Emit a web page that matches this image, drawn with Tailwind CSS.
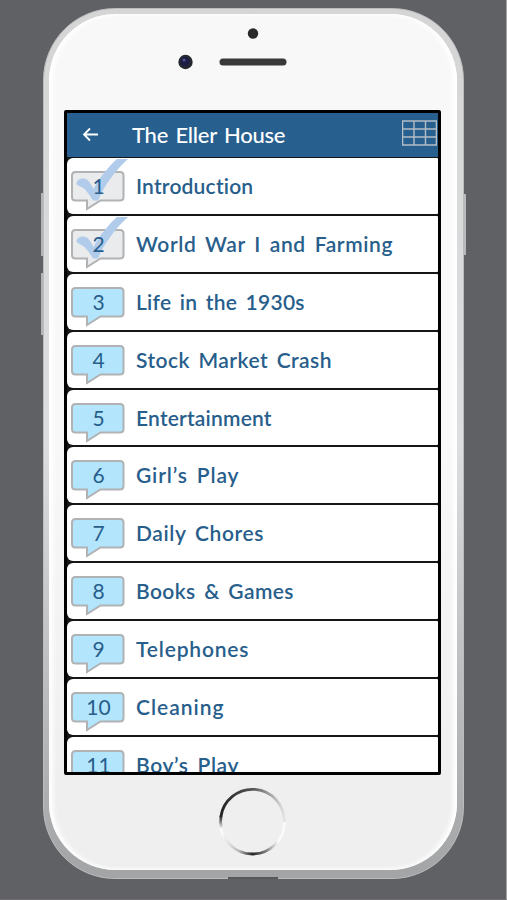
<!DOCTYPE html>
<html lang="en">
<head>
<meta charset="utf-8">
<title>The Eller House</title>
<script src="https://cdn.jsdelivr.net/npm/@tailwindcss/browser@4"></script>
</head>
<body class="w-[507px] h-[900px] overflow-hidden bg-[#606165] border-r border-b border-r-[#a5a5a8] border-b-[#707074] font-[Lato,sans-serif]">
<svg width="0" height="0" class="absolute">
  <symbol id="bubble" viewBox="0 0 60 56">
    <path d="M8.500 14H53Q56.500 14 56.500 17.500V39Q56.500 42.500 53 42.500H33.500L20 51V42.500H8.500Q5 42.500 5 39V17.500Q5 14 8.500 14Z" fill="currentColor" stroke="#b0b2b4" stroke-width="2"/>
  </symbol>
  <symbol id="check" viewBox="0 0 62 56">
    <path d="M9.500 24.500C11 20.500 17 19 21 22.500C23.500 25 25 28 26.500 31C33 19 42 8 50 1H61C49 12 38 26 31 42.500H26C22 36 18 30.500 14.500 29C11 27.500 9 26.500 9.500 24.500Z" fill="#b1cceb"/>
  </symbol>
</svg>
<div class="relative w-[421px] h-[871px] ml-[43px] mt-[8px] rounded-[72px] bg-linear-to-b from-[#d5d5d5] via-[#dcdedf] to-[#a3a4a5] p-[5px_6px_8px_5px] border border-[#bbbcbd]">
  <i class="absolute -left-[3px] top-[184px] w-[2px] h-[63px] bg-[#b4b5b7]"></i>
  <i class="absolute -left-[3px] top-[264px] w-[2px] h-[62px] bg-[#b4b5b7]"></i>
  <i class="absolute -right-[3px] top-[185px] w-[3px] h-[61px] bg-[#b9babc]"></i>
  <i class="absolute left-[184px] -bottom-[1px] w-[50px] h-[2px] bg-[#57585a]"></i>
  <div class="relative h-full rounded-[67px] bg-linear-to-b from-[#f8f8f8] from-50% to-[#efefef] to-90% shadow-[inset_4px_0_5px_#fff,inset_-4px_0_5px_#fff] flex flex-col">
    <svg class="block shrink-0" width="408" height="96" viewBox="49 14 408 96">
      <circle cx="253" cy="33.500" r="5.200" fill="#29292a"/>
      <circle cx="185.500" cy="62" r="7.200" fill="#252730"/>
      <circle cx="185" cy="61.500" r="4.500" fill="#1c1e48"/>
      <circle cx="184" cy="60" r="1.500" fill="#51558b"/>
      <rect x="219.500" y="58.500" width="67" height="7" rx="3.500" fill="#39393a"/>
    </svg>
    <main class="ml-[15px] w-[377px] h-[665px] shrink-0 border-[3px] border-black rounded-[2px] bg-[#161616] overflow-hidden flex flex-col">
      <header class="h-[44px] shrink-0 bg-[#275f8e] flex items-center text-white">
        <svg class="ml-[15px] shrink-0" width="18" height="16" viewBox="0 0 18 16" fill="none" stroke="#fff" stroke-width="1.800"><path d="M16 7.500H2M8 1.500L2 7.500L8 13.500"/></svg>
        <h1 class="ml-[32px] w-[153px] text-[22px] leading-[44px] font-medium whitespace-nowrap [word-spacing:2px]" data-w="153"><span>The Eller House</span></h1>
        <svg class="ml-auto mr-px mb-[4px] shrink-0" width="35" height="26" viewBox="0 0 35 26" fill="none" stroke="#b4bec6" stroke-width="1.400"><path d="M.6 1H34.400V25H.6ZM.6 9H34.400M.6 17H34.400M12 1V25M23.500 1V25"/></svg>
      </header>
      <ol id="list" class="flex flex-col gap-[2px] pt-px"></ol>
    </main>
    <svg class="block shrink-0" width="408" height="94" viewBox="49 775 408 94">
      <defs>
        <linearGradient id="top" x1="0" x2="1"><stop offset="0" stop-color="#222"/><stop offset=".5" stop-color="#555"/><stop offset="1" stop-color="#e4e4e4"/></linearGradient>
        <linearGradient id="left" x1="0" x2="0" y1="0" y2="1"><stop offset="0" stop-color="#222"/><stop offset="1" stop-color="#fff"/></linearGradient>
        <linearGradient id="bot" x1="0" x2="1"><stop offset="0" stop-color="#fff"/><stop offset=".28" stop-color="#bbb"/><stop offset=".5" stop-color="#252525"/><stop offset=".7" stop-color="#777"/><stop offset=".9" stop-color="#fafafa"/></linearGradient>
      </defs>
      <g fill="none" stroke-width="2.800">
        <path d="M220.800 817A32 32 0 0 1 284.500 822" stroke="url(#top)"/>
        <path d="M220.500 822A32 32 0 0 0 284.500 822" stroke="url(#bot)"/>
        <path d="M221 816A32 32 0 0 0 221.500 829" stroke="url(#left)"/>
      </g>
    </svg>
  </div>
</div>
<script>
const chapters = [
  ["Introduction", 117, true], ["World War I and Farming", 256, true],
  ["Life in the 1930s", 168], ["Stock Market Crash", 195], ["Entertainment", 135],
  ["Girl’s Play", 102], ["Daily Chores", 127], ["Books & Games", 157],
  ["Telephones", 112], ["Cleaning", 87], ["Boy’s Play", 102]
];
document.getElementById("list").innerHTML = chapters.map(([name, width, done], i) => `
<li class="h-[55.9px] shrink-0 bg-white rounded-l-[6px] rounded-r-[1px] flex items-center text-[#285e8b]">
  <div class="relative w-[60px] h-[56px] shrink-0">
    <svg width="60" height="56" class="absolute inset-0 ${done ? "text-[#eaebed]" : "text-[#b3e5fc]"}"><use href="#bubble"/></svg>
    ${done ? `<svg width="62" height="56" class="absolute left-0 top-0 max-w-none"><use href="#check"/></svg>` : ""}
    <b class="absolute left-[1.5px] top-[13px] w-[60px] text-center text-[21px] leading-[30px] font-normal">${i + 1}</b>
  </div>
  <div class="ml-[9px] text-[21px] leading-[56px] font-semibold whitespace-nowrap [word-spacing:3px]" data-w="${width}"><span>${name.replace("&", "&amp;")}</span></div>
</li>`).join("");
// Track each label to its set width once styles and fonts are in place.
function track() {
  document.querySelectorAll("[data-w]").forEach(el => {
    const s = el.firstElementChild;
    el.style.letterSpacing = "0px";
    el.style.letterSpacing = (Number(el.dataset.w) + 0.5 - s.getBoundingClientRect().width) / (s.textContent.length - 1) + "px";
  });
}
track();
addEventListener("load", () => { track(); document.fonts.ready.then(track); });
new ResizeObserver(track).observe(document.querySelector("h1"));
</script>
</body>
</html>
